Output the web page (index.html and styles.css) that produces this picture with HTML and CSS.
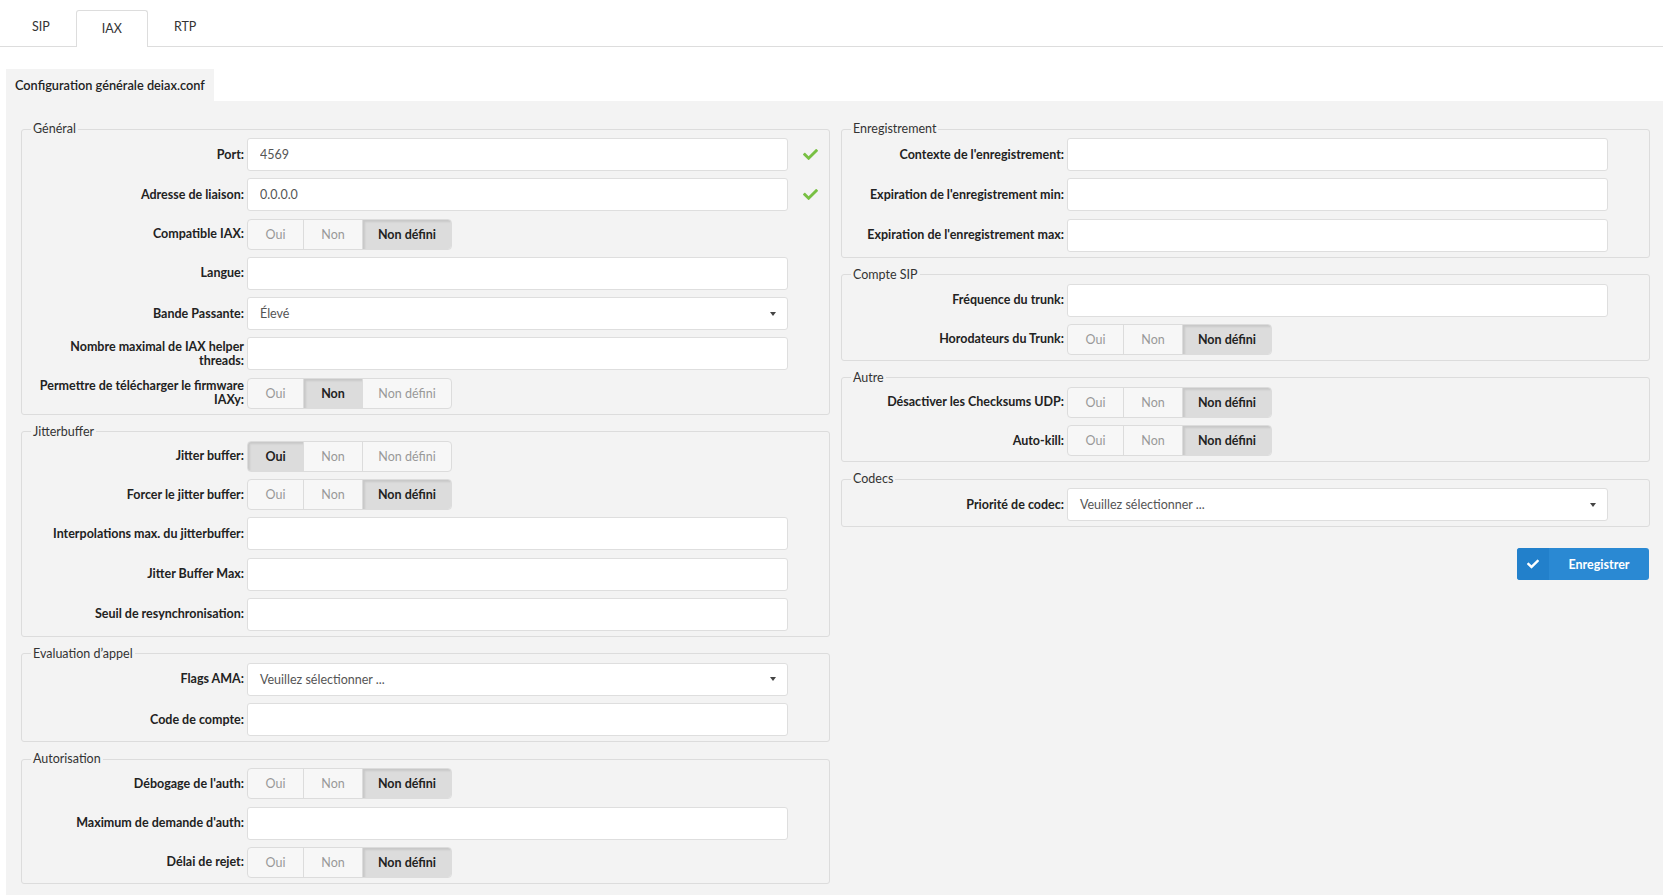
FILE: index.html
```html
<!DOCTYPE html>
<html lang="fr">
<head>
    <meta charset="UTF-8">
    <meta name="viewport" content="width=device-width, initial-scale=1.0">
    <title>Configuration IAX</title>
    <link rel="stylesheet" href="styles.css">
</head>
<body>

<nav class="tabs">
    <a class="tab">SIP</a>
    <a class="tab active">IAX</a>
    <a class="tab">RTP</a>
</nav>

<div class="panel-head">Configuration générale deiax.conf</div>

<div class="panel">
    <div class="columns">
        <!-- colonne gauche -->
        <div class="col">
            <fieldset>
                <legend>Général</legend>
                <div class="row">
                    <label>Port:</label>
                    <input type="text" value="4569">
                    <svg class="ok" viewBox="0 0 512 512"><path d="M173.9 439.4l-166.4-166.4c-10-10-10-26.2 0-36.2l36.2-36.2c10-10 26.2-10 36.2 0L192 312.7 432.1 72.6c10-10 26.2-10 36.2 0l36.2 36.2c10 10 10 26.2 0 36.2l-294.4 294.4c-10 10-26.2 10-36.2 0z"/></svg>
                </div>
                <div class="row">
                    <label>Adresse de liaison:</label>
                    <input type="text" value="0.0.0.0">
                    <svg class="ok" viewBox="0 0 512 512"><path d="M173.9 439.4l-166.4-166.4c-10-10-10-26.2 0-36.2l36.2-36.2c10-10 26.2-10 36.2 0L192 312.7 432.1 72.6c10-10 26.2-10 36.2 0l36.2 36.2c10 10 10 26.2 0 36.2l-294.4 294.4c-10 10-26.2 10-36.2 0z"/></svg>
                </div>
                <div class="row">
                    <label>Compatible IAX:</label>
                    <div class="toggle"><span>Oui</span><span>Non</span><span class="on">Non défini</span></div>
                </div>
                <div class="row">
                    <label>Langue:</label>
                    <input type="text">
                </div>
                <div class="row">
                    <label>Bande Passante:</label>
                    <div class="select"><span>Élevé</span><i class="caret"></i></div>
                </div>
                <div class="row">
                    <label>Nombre maximal de IAX helper threads:</label>
                    <input type="text">
                </div>
                <div class="row">
                    <label>Permettre de télécharger le firmware IAXy:</label>
                    <div class="toggle"><span>Oui</span><span class="on">Non</span><span>Non défini</span></div>
                </div>
            </fieldset>

            <fieldset>
                <legend>Jitterbuffer</legend>
                <div class="row">
                    <label>Jitter buffer:</label>
                    <div class="toggle"><span class="on">Oui</span><span>Non</span><span>Non défini</span></div>
                </div>
                <div class="row">
                    <label>Forcer le jitter buffer:</label>
                    <div class="toggle"><span>Oui</span><span>Non</span><span class="on">Non défini</span></div>
                </div>
                <div class="row">
                    <label>Interpolations max. du jitterbuffer:</label>
                    <input type="text">
                </div>
                <div class="row">
                    <label>Jitter Buffer Max:</label>
                    <input type="text">
                </div>
                <div class="row">
                    <label>Seuil de resynchronisation:</label>
                    <input type="text">
                </div>
            </fieldset>

            <fieldset>
                <legend>Evaluation d’appel</legend>
                <div class="row">
                    <label>Flags AMA:</label>
                    <div class="select"><span>Veuillez sélectionner ...</span><i class="caret"></i></div>
                </div>
                <div class="row">
                    <label>Code de compte:</label>
                    <input type="text">
                </div>
            </fieldset>

            <fieldset>
                <legend>Autorisation</legend>
                <div class="row">
                    <label>Débogage de l'auth:</label>
                    <div class="toggle"><span>Oui</span><span>Non</span><span class="on">Non défini</span></div>
                </div>
                <div class="row">
                    <label>Maximum de demande d'auth:</label>
                    <input type="text">
                </div>
                <div class="row">
                    <label>Délai de rejet:</label>
                    <div class="toggle"><span>Oui</span><span>Non</span><span class="on">Non défini</span></div>
                </div>
            </fieldset>
        </div>

        <!-- colonne droite -->
        <div class="col">
            <fieldset>
                <legend>Enregistrement</legend>
                <div class="row">
                    <label>Contexte de l'enregistrement:</label>
                    <input type="text">
                </div>
                <div class="row">
                    <label>Expiration de l'enregistrement min:</label>
                    <input type="text">
                </div>
                <div class="row">
                    <label>Expiration de l'enregistrement max:</label>
                    <input type="text">
                </div>
            </fieldset>

            <fieldset>
                <legend>Compte SIP</legend>
                <div class="row">
                    <label>Fréquence du trunk:</label>
                    <input type="text">
                </div>
                <div class="row">
                    <label>Horodateurs du Trunk:</label>
                    <div class="toggle"><span>Oui</span><span>Non</span><span class="on">Non défini</span></div>
                </div>
            </fieldset>

            <fieldset>
                <legend>Autre</legend>
                <div class="row">
                    <label>Désactiver les Checksums UDP:</label>
                    <div class="toggle"><span>Oui</span><span>Non</span><span class="on">Non défini</span></div>
                </div>
                <div class="row">
                    <label>Auto-kill:</label>
                    <div class="toggle"><span>Oui</span><span>Non</span><span class="on">Non défini</span></div>
                </div>
            </fieldset>

            <fieldset>
                <legend>Codecs</legend>
                <div class="row">
                    <label>Priorité de codec:</label>
                    <div class="select"><span>Veuillez sélectionner ...</span><i class="caret"></i></div>
                </div>
            </fieldset>

            <div class="actions">
                <button type="button" class="btn-save">
                    <span class="btn-icon"><svg viewBox="0 0 512 512"><path d="M173.9 439.4l-166.4-166.4c-10-10-10-26.2 0-36.2l36.2-36.2c10-10 26.2-10 36.2 0L192 312.7 432.1 72.6c10-10 26.2-10 36.2 0l36.2 36.2c10 10 10 26.2 0 36.2l-294.4 294.4c-10 10-26.2 10-36.2 0z"/></svg></span>
                    <span class="btn-text">Enregistrer</span>
                </button>
            </div>
        </div>
    </div>
</div>

</body>
</html>
```

FILE: styles.css
```css
body {
    margin: 0;
    font-family: Lato, "Open Sans", Arial, sans-serif;
    font-size: 12.5px;
    color: #333;
    background: #fff;
}
.tabs {
    display: flex;
    padding: 10px 0 0 6px;
    border-bottom: 1px solid #ddd;
}
.tab {
    height: 35px;
    line-height: 31px;
    padding: 0 25px;
    color: #333;
    border: 1px solid transparent;
    border-bottom: none;
    cursor: pointer;
}
.tab.active {
    line-height: 35px;
    background: #fff;
    border-color: #ddd;
    border-radius: 3px 3px 0 0;
    margin-bottom: -1px;
    height: 36px;
}
.panel-head {
    display: inline-block;
    margin: 22px 0 0 6px;
    padding: 0 9px;
    height: 32px;
    line-height: 32px;
    background: #f3f3f3;
    font-size: 12.75px;
    font-weight: 600;
    color: #222;
}
.panel {
    margin-left: 6px;
    padding: 19px 13px 0 15px;
    background: #f3f3f3;
    min-height: calc(100vh - 101px);
    box-sizing: border-box;
}
.columns {
    display: grid;
    grid-template-columns: 1fr 1fr;
    column-gap: 11px;
}
fieldset {
    margin: 0 0 8px;
    padding: 0 0 5px;
    border: 1px solid #dcdcdc;
    border-radius: 3px;
    min-width: 0;
}
legend {
    margin-left: 9px;
    padding: 0 2px;
    line-height: 18px;
    color: #333;
}
.row {
    display: grid;
    grid-template-columns: 222px 541px 1fr;
    column-gap: 3px;
    align-items: center;
    margin-bottom: 7.3px;
}
.row:last-child {
    margin-bottom: 0;
}
.row label {
    text-align: right;
    font-weight: bold;
    line-height: 14px;
    padding-left: 14px;
    color: #222;
}
.row input,
.select {
    box-sizing: border-box;
    height: 33px;
    padding: 0 12px;
    border: 1px solid #dedede;
    border-radius: 3px;
    background: #fff;
    font-family: inherit;
    font-size: 12.5px;
    color: #555;
    outline: none;
}
.select {
    display: flex;
    align-items: center;
    justify-content: space-between;
}
.caret {
    width: 0;
    height: 0;
    border-left: 3.5px solid transparent;
    border-right: 3.5px solid transparent;
    border-top: 4px solid #444;
    margin-right: -1px;
}
.ok {
    width: 15px;
    height: 15px;
    margin-left: 12px;
    fill: #78c043;
}
.toggle {
    display: flex;
    justify-self: start;
    height: 31px;
    box-sizing: border-box;
    border: 1px solid #dcdcdc;
    border-radius: 4px;
    overflow: hidden;
    background: #f7f7f7;
}
.toggle span {
    display: flex;
    align-items: center;
    justify-content: center;
    color: #999;
}
.toggle span:nth-child(1) { width: 55px; }
.toggle span:nth-child(2) { width: 58px; border-left: 1px solid #dcdcdc; }
.toggle span:nth-child(3) { width: 88px; border-left: 1px solid #dcdcdc; }
.toggle span.on {
    background: #dcdcdc;
    color: #222;
    font-weight: bold;
    box-shadow: inset 2px 2px 2px rgba(0, 0, 0, 0.09);
}
.actions {
    display: flex;
    justify-content: flex-end;
    margin-top: 21px;
}
.btn-save {
    display: flex;
    height: 32px;
    padding: 0;
    border: none;
    border-radius: 3px;
    overflow: hidden;
    background: #2a89d3;
    color: #fff;
    font-family: inherit;
    font-size: 12.5px;
    font-weight: bold;
    cursor: pointer;
    margin-right: 1px;
}
.btn-icon {
    width: 32px;
    display: flex;
    align-items: center;
    justify-content: center;
    background: #2280cb;
}
.btn-icon svg {
    width: 12px;
    height: 12px;
    fill: #fff;
}
.btn-text {
    width: 100px;
    display: flex;
    align-items: center;
    justify-content: center;
}
.btn-save:hover {
    background: #1f78be;
}
```
